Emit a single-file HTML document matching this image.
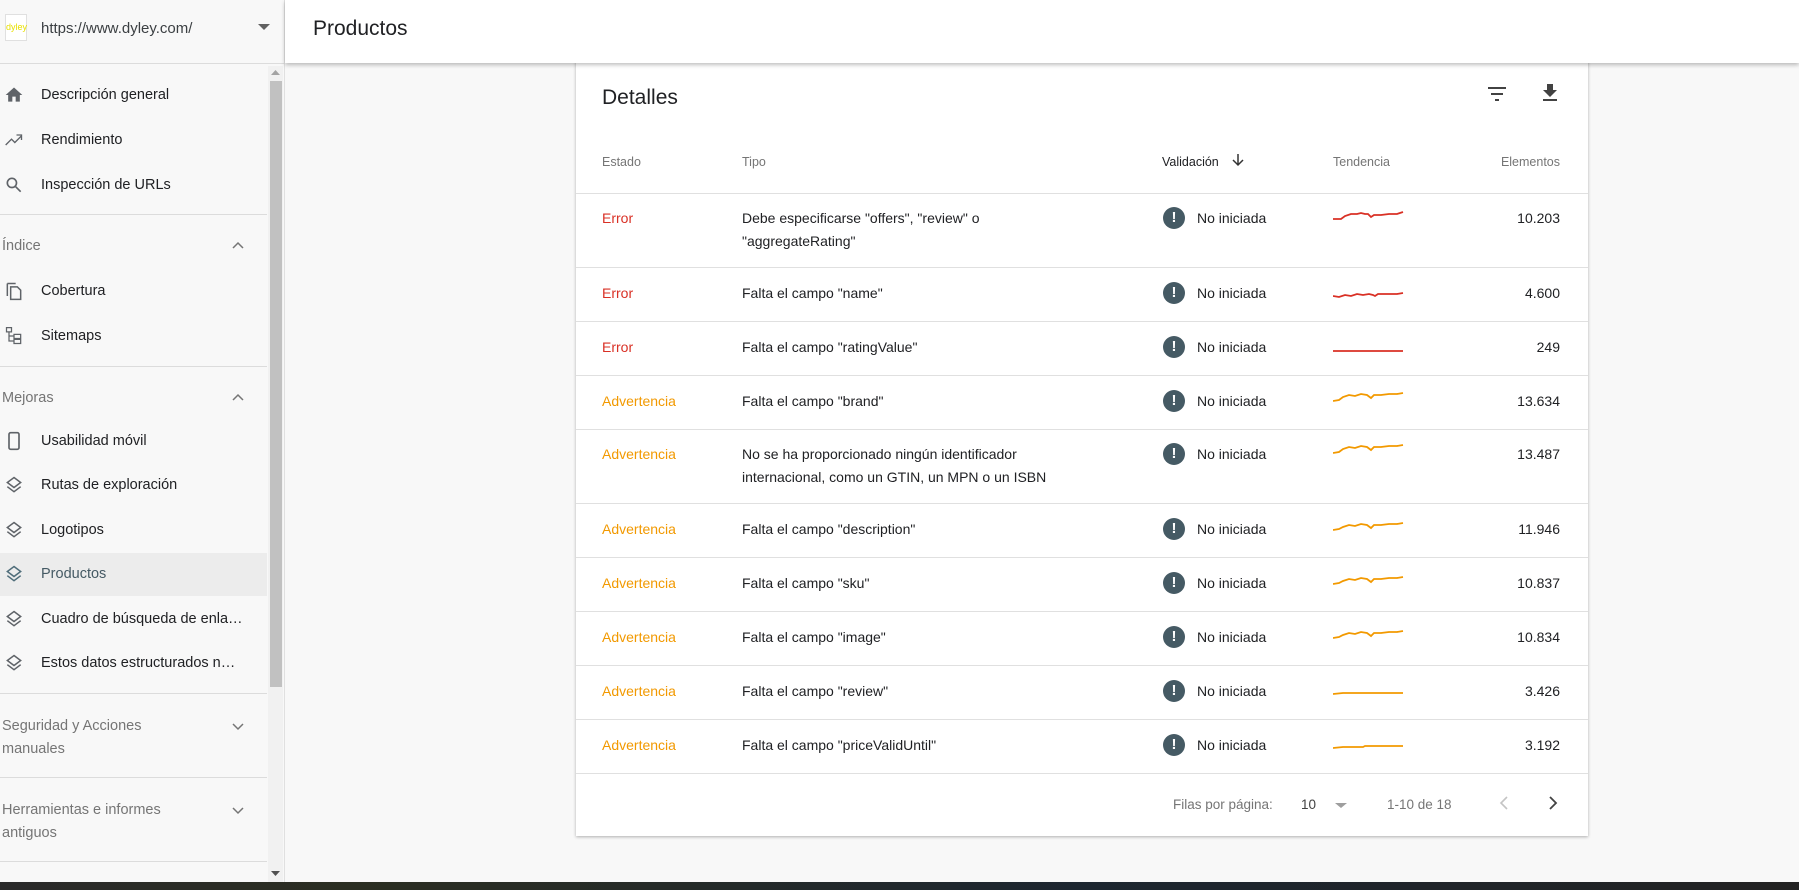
<!DOCTYPE html>
<html><head><meta charset="utf-8"><style>
*{margin:0;padding:0;box-sizing:border-box}
body{width:1799px;height:890px;overflow:hidden;background:#f8f8f8;font-family:"Liberation Sans",sans-serif;position:relative;color:#202124}
.abs{position:absolute}
#side{left:0;top:0;width:285px;height:882px;background:#f8f8f8;border-right:1px solid #e0e0e0}
.item{position:absolute;left:0;width:267px;height:43px;font-size:14.5px;color:#202124;line-height:43px}
.item span{position:absolute;left:41px}
.item svg{position:absolute;left:4px;top:11px}
.sec{position:absolute;left:2px;font-size:14.5px;color:#757575;line-height:23px}
.chev{position:absolute;left:232px}
.div{position:absolute;left:0;width:267px;height:1px;background:#dcdcdc}
#hdr{left:285px;top:0;width:1514px;height:63px;background:#fff;box-shadow:0 2px 4px rgba(0,0,0,.25);z-index:2}
#card{left:576px;top:60px;width:1012px;height:776px;background:#fff;box-shadow:0 1px 3px rgba(0,0,0,.3)}
.th{position:absolute;top:95px;font-size:12.5px;color:#757575}
.row{position:absolute;left:0;width:1012px;border-top:1px solid #e0e0e0}
.c{position:absolute;font-size:14px;line-height:23px}
.err{color:#d93025}.adv{color:#f29900}
.ic{position:absolute;left:587px;width:22px;height:22px;border-radius:50%;background:#455a64;color:#fff;font-weight:bold;font-size:15px;text-align:center;line-height:22px}
</style></head><body>
<div id="side" class="abs">
 <div class="abs" style="left:5px;top:14px;width:22px;height:27px;background:#fff;border:1px solid #e0e0e0;font-size:9px;color:#e8e000;line-height:25px;text-align:center">dyley</div>
 <div class="abs" style="left:41px;top:20px;font-size:15px;color:#3c4043">https://www.dyley.com/</div>
 <svg class="abs" style="left:258px;top:24px" width="12" height="7"><path d="M0 0H12L6 6Z" fill="#616161"/></svg>
 <div class="abs" style="left:0;top:63px;width:285px;height:1px;background:#dcdcdc"></div>
 <div class="abs" style="left:268px;top:66px;width:15px;height:816px;background:#f1f1f1"></div>
 <div class="abs" style="left:270px;top:81px;width:12px;height:606px;background:#c1c1c1"></div>
 <svg class="abs" style="left:271px;top:70px" width="9" height="6"><path d="M0 5H9L4.5 0Z" fill="#a3a3a3"/></svg>
 <svg class="abs" style="left:271px;top:871px" width="9" height="6"><path d="M0 0H9L4.5 5Z" fill="#505050"/></svg>

 <div class="item" style="top:74px"><svg width="20" height="20" viewBox="0 0 24 24"><path d="M10 20v-6h4v6h5v-8h3L12 3 2 12h3v8z" fill="#5f6368"/></svg><span>Descripción general</span></div>
 <div class="item" style="top:119px"><svg width="20" height="20" viewBox="0 0 24 24"><path d="M2 18l7-7 4 4 8-8M15 6h6v6" stroke="#5f6368" stroke-width="1.6" fill="none"/></svg><span>Rendimiento</span></div>
 <div class="item" style="top:164px"><svg width="20" height="20" viewBox="0 0 24 24"><circle cx="9.5" cy="9.5" r="5.5" stroke="#5f6368" stroke-width="2" fill="none"/><path d="M14 14l6 6" stroke="#5f6368" stroke-width="2"/></svg><span>Inspección de URLs</span></div>
 <div class="div" style="top:214px"></div>
 <div class="sec" style="top:235px">Índice</div>
 <svg class="chev" style="top:241px" width="12" height="8"><path d="M1 7l5-5 5 5" stroke="#757575" stroke-width="1.5" fill="none"/></svg>
 <div class="item" style="top:270px"><svg width="20" height="20" viewBox="0 0 24 24"><path d="M4 3h10M4 3v15M8 7h8l4 4v11H8z" stroke="#5f6368" stroke-width="1.8" fill="none"/></svg><span>Cobertura</span></div>
 <div class="item" style="top:315px"><svg width="20" height="20" viewBox="0 0 24 24"><path d="M3 2h6v5H3zM12 10h8v5h-8zM12 16h8v5h-8zM6 7v11h6M6 12h6" stroke="#5f6368" stroke-width="1.5" fill="none"/></svg><span>Sitemaps</span></div>
 <div class="div" style="top:366px"></div>
 <div class="sec" style="top:387px">Mejoras</div>
 <svg class="chev" style="top:393px" width="12" height="8"><path d="M1 7l5-5 5 5" stroke="#757575" stroke-width="1.5" fill="none"/></svg>
 <div class="item" style="top:420px"><svg width="20" height="20" viewBox="0 0 24 24"><rect x="6" y="2" width="12" height="20" rx="2" stroke="#5f6368" stroke-width="2" fill="none"/></svg><span>Usabilidad móvil</span></div>
 <div class="item" style="top:464px"><svg width="20" height="20" viewBox="0 0 24 24"><path d="M12 3l8 6-8 6-8-6zM4 14l8 6 8-6" stroke="#5f6368" stroke-width="1.8" fill="none"/></svg><span>Rutas de exploración</span></div>
 <div class="item" style="top:509px"><svg width="20" height="20" viewBox="0 0 24 24"><path d="M12 3l8 6-8 6-8-6zM4 14l8 6 8-6" stroke="#5f6368" stroke-width="1.8" fill="none"/></svg><span>Logotipos</span></div>
 <div class="item" style="top:553px;background:#ececec;color:#455a64"><svg width="20" height="20" viewBox="0 0 24 24"><path d="M12 3l8 6-8 6-8-6zM4 14l8 6 8-6" stroke="#4f6d7a" stroke-width="1.8" fill="none"/></svg><span>Productos</span></div>
 <div class="item" style="top:598px"><svg width="20" height="20" viewBox="0 0 24 24"><path d="M12 3l8 6-8 6-8-6zM4 14l8 6 8-6" stroke="#5f6368" stroke-width="1.8" fill="none"/></svg><span>Cuadro de búsqueda de enla…</span></div>
 <div class="item" style="top:642px"><svg width="20" height="20" viewBox="0 0 24 24"><path d="M12 3l8 6-8 6-8-6zM4 14l8 6 8-6" stroke="#5f6368" stroke-width="1.8" fill="none"/></svg><span>Estos datos estructurados n…</span></div>
 <div class="div" style="top:693px"></div>
 <div class="sec" style="top:715px">Seguridad y Acciones<br>manuales</div>
 <svg class="chev" style="top:723px" width="12" height="8"><path d="M1 1l5 5 5-5" stroke="#757575" stroke-width="1.5" fill="none"/></svg>
 <div class="div" style="top:777px"></div>
 <div class="sec" style="top:799px">Herramientas e informes<br>antiguos</div>
 <svg class="chev" style="top:807px" width="12" height="8"><path d="M1 1l5 5 5-5" stroke="#757575" stroke-width="1.5" fill="none"/></svg>
 <div class="div" style="top:861px"></div>
</div>
<div id="hdr" class="abs"><div class="abs" style="left:28px;top:17px;font-size:21px;color:#202124">Productos</div></div>
<div class="abs" style="left:0;top:882px;width:1799px;height:8px;background:linear-gradient(90deg,#2a2a2a,#2b2e22 20%,#1d2630 60%,#222)"></div>

<div id="card" class="abs">
 <div class="abs" style="left:26px;top:26px;font-size:21px;color:#202124">Detalles</div>
 <svg class="abs" style="left:909px;top:22px" width="24" height="24" viewBox="0 0 24 24"><path d="M3 6h18M6 12h12M10 18h4" stroke="#424242" stroke-width="2"/></svg>
 <svg class="abs" style="left:962px;top:21px" width="24" height="24" viewBox="0 0 24 24"><path d="M19 9h-4V3H9v6H5l7 7zM5 18v2h14v-2z" fill="#424242"/></svg>
 <div class="th" style="left:26px">Estado</div>
 <div class="th" style="left:166px">Tipo</div>
 <div class="th" style="left:586px;color:#202124">Validación</div>
 <svg class="abs" style="left:655px;top:93px" width="14" height="14" viewBox="0 0 14 14"><path d="M7 1v11M2 7l5 5 5-5" stroke="#333" stroke-width="1.5" fill="none"/></svg>
 <div class="th" style="left:757px">Tendencia</div>
 <div class="th" style="right:28px">Elementos</div>

 <div class="row" style="top:133px;height:74px"><div class="c err" style="left:26px;top:13px">Error</div><div class="c" style="left:166px;top:13px">Debe especificarse "offers", "review" o<br>"aggregateRating"</div><div class="ic" style="top:13px">!</div><div class="c" style="left:621px;top:13px">No iniciada</div><svg class="abs" style="left:757px;top:14px" width="72" height="14"><polyline points="0,11 8,11 12,8 18,6 24,6 28,5 32,6 35,6 38,9 41,7 48,7 56,6 64,6 70,4" stroke="#d93025" stroke-width="1.8" fill="none"/></svg><div class="c" style="right:28px;top:13px">10.203</div></div>
 <div class="row" style="top:207px;height:54px"><div class="c err" style="left:26px;top:14px">Error</div><div class="c" style="left:166px;top:14px">Falta el campo "name"</div><div class="ic" style="top:14px">!</div><div class="c" style="left:621px;top:14px">No iniciada</div><svg class="abs" style="left:757px;top:19px" width="72" height="14"><polyline points="0,9 6,10 12,8 18,9 24,7 30,8 36,7 40,8 42,9 45,7 54,7 64,7 70,6" stroke="#d93025" stroke-width="1.8" fill="none"/></svg><div class="c" style="right:28px;top:14px">4.600</div></div>
 <div class="row" style="top:261px;height:54px"><div class="c err" style="left:26px;top:14px">Error</div><div class="c" style="left:166px;top:14px">Falta el campo "ratingValue"</div><div class="ic" style="top:14px">!</div><div class="c" style="left:621px;top:14px">No iniciada</div><svg class="abs" style="left:757px;top:19px" width="72" height="14"><polyline points="0,10 70,10" stroke="#d93025" stroke-width="1.8" fill="none"/></svg><div class="c" style="right:28px;top:14px">249</div></div>
 <div class="row" style="top:315px;height:54px"><div class="c adv" style="left:26px;top:14px">Advertencia</div><div class="c" style="left:166px;top:14px">Falta el campo "brand"</div><div class="ic" style="top:14px">!</div><div class="c" style="left:621px;top:14px">No iniciada</div><svg class="abs" style="left:757px;top:13px" width="72" height="16"><polyline points="0,12 6,11 10,8 16,6 22,7 28,5 34,6 38,9 41,6 48,6 56,5 64,5 70,4" stroke="#f29900" stroke-width="1.8" fill="none"/></svg><div class="c" style="right:28px;top:14px">13.634</div></div>
 <div class="row" style="top:369px;height:74px"><div class="c adv" style="left:26px;top:13px">Advertencia</div><div class="c" style="left:166px;top:13px">No se ha proporcionado ningún identificador<br>internacional, como un GTIN, un MPN o un ISBN</div><div class="ic" style="top:13px">!</div><div class="c" style="left:621px;top:13px">No iniciada</div><svg class="abs" style="left:757px;top:11px" width="72" height="16"><polyline points="0,12 6,11 10,8 16,6 22,7 28,5 34,6 38,9 41,6 48,6 56,5 64,5 70,4" stroke="#f29900" stroke-width="1.8" fill="none"/></svg><div class="c" style="right:28px;top:13px">13.487</div></div>
 <div class="row" style="top:443px;height:54px"><div class="c adv" style="left:26px;top:14px">Advertencia</div><div class="c" style="left:166px;top:14px">Falta el campo "description"</div><div class="ic" style="top:14px">!</div><div class="c" style="left:621px;top:14px">No iniciada</div><svg class="abs" style="left:757px;top:14px" width="72" height="16"><polyline points="0,12 6,11 10,9 16,7 22,8 28,6 34,7 38,10 41,7 48,7 56,6 64,6 70,5" stroke="#f29900" stroke-width="1.8" fill="none"/></svg><div class="c" style="right:28px;top:14px">11.946</div></div>
 <div class="row" style="top:497px;height:54px"><div class="c adv" style="left:26px;top:14px">Advertencia</div><div class="c" style="left:166px;top:14px">Falta el campo "sku"</div><div class="ic" style="top:14px">!</div><div class="c" style="left:621px;top:14px">No iniciada</div><svg class="abs" style="left:757px;top:14px" width="72" height="16"><polyline points="0,12 6,11 10,9 16,7 22,8 28,6 34,7 38,10 41,7 48,7 56,6 64,6 70,5" stroke="#f29900" stroke-width="1.8" fill="none"/></svg><div class="c" style="right:28px;top:14px">10.837</div></div>
 <div class="row" style="top:551px;height:54px"><div class="c adv" style="left:26px;top:14px">Advertencia</div><div class="c" style="left:166px;top:14px">Falta el campo "image"</div><div class="ic" style="top:14px">!</div><div class="c" style="left:621px;top:14px">No iniciada</div><svg class="abs" style="left:757px;top:14px" width="72" height="16"><polyline points="0,12 6,11 10,9 16,7 22,8 28,6 34,7 38,10 41,7 48,7 56,6 64,6 70,5" stroke="#f29900" stroke-width="1.8" fill="none"/></svg><div class="c" style="right:28px;top:14px">10.834</div></div>
 <div class="row" style="top:605px;height:54px"><div class="c adv" style="left:26px;top:14px">Advertencia</div><div class="c" style="left:166px;top:14px">Falta el campo "review"</div><div class="ic" style="top:14px">!</div><div class="c" style="left:621px;top:14px">No iniciada</div><svg class="abs" style="left:757px;top:19px" width="72" height="14"><polyline points="0,9 10,8 70,8" stroke="#f29900" stroke-width="1.8" fill="none"/></svg><div class="c" style="right:28px;top:14px">3.426</div></div>
 <div class="row" style="top:659px;height:54px"><div class="c adv" style="left:26px;top:14px">Advertencia</div><div class="c" style="left:166px;top:14px">Falta el campo "priceValidUntil"</div><div class="ic" style="top:14px">!</div><div class="c" style="left:621px;top:14px">No iniciada</div><svg class="abs" style="left:757px;top:19px" width="72" height="14"><polyline points="0,9 10,8 30,8 32,7 70,7" stroke="#f29900" stroke-width="1.8" fill="none"/></svg><div class="c" style="right:28px;top:14px">3.192</div></div>
 <div class="row" style="top:713px;height:63px">
  <div class="c" style="left:597px;top:19px;font-size:13.5px;color:#757575">Filas por página:</div>
  <div class="c" style="left:725px;top:19px;font-size:13.5px;color:#424242">10</div>
  <svg class="abs" style="left:759px;top:29px" width="12" height="6"><path d="M0 0H12L6 5Z" fill="#9e9e9e"/></svg>
  <div class="c" style="left:811px;top:19px;font-size:13.5px;color:#757575">1-10 de 18</div>
  <svg class="abs" style="left:923px;top:22px" width="10" height="14"><path d="M8 1L2 7l6 6" stroke="#c4c4c4" stroke-width="1.6" fill="none"/></svg>
  <svg class="abs" style="left:972px;top:22px" width="10" height="14"><path d="M2 1l6 6-6 6" stroke="#424242" stroke-width="1.8" fill="none"/></svg>
 </div>
</div>
</body></html>
